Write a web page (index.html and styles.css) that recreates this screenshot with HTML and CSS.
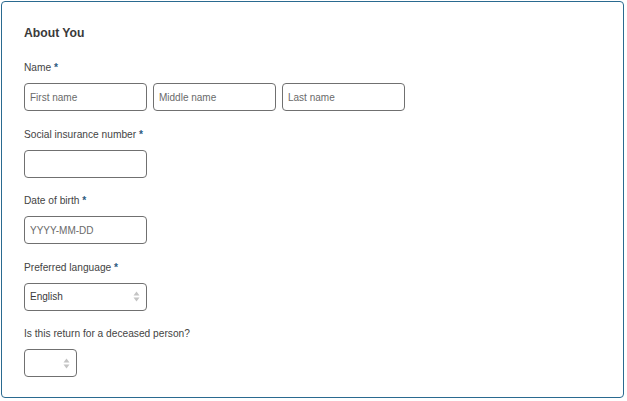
FILE: index.html
```html
<!DOCTYPE html>
<html lang="en">
<head>
<meta charset="utf-8">
<title>About You</title>
<link rel="stylesheet" href="styles.css">
</head>
<body>
<form class="card">
  <h2 class="title">About You</h2>
  <div class="group">
    <label class="label">Name <span class="req">*</span></label>
    <div class="row">
      <input class="input" type="text" placeholder="First name">
      <input class="input" type="text" placeholder="Middle name">
      <input class="input" type="text" placeholder="Last name">
    </div>
  </div>
  <div class="group">
    <label class="label">Social insurance number <span class="req">*</span></label>
    <input class="input" type="text">
  </div>
  <div class="group">
    <label class="label">Date of birth <span class="req">*</span></label>
    <input class="input" type="text" placeholder="YYYY-MM-DD">
  </div>
  <div class="group">
    <label class="label">Preferred language <span class="req">*</span></label>
    <div class="select">
      <span class="select-value">English</span>
      <svg class="arrows" width="7" height="11" viewBox="0 0 7 11"><path d="M3.5 0.5 L6.5 4.5 H0.5 Z M3.5 10.5 L6.5 6.5 H0.5 Z" fill="#c4c4c4"/></svg>
    </div>
  </div>
  <div class="group">
    <label class="label">Is this return for a deceased person?</label>
    <div class="select small">
      <span class="select-value"></span>
      <svg class="arrows" width="7" height="11" viewBox="0 0 7 11"><path d="M3.5 0.5 L6.5 4.5 H0.5 Z M3.5 10.5 L6.5 6.5 H0.5 Z" fill="#c4c4c4"/></svg>
    </div>
  </div>
</form>
</body>
</html>
```

FILE: styles.css
```css
html, body {
  margin: 0;
  padding: 0;
  background: #ffffff;
}
body {
  font-family: "Liberation Sans", Arial, sans-serif;
  color: #333333;
}
.card {
  margin: 1px;
  width: 623px;
  height: 397px;
  box-sizing: border-box;
  border: 1px solid #2a6a90;
  border-radius: 4px;
  padding: 22px 22px 0 22px;
  display: flex;
  flex-direction: column;
  gap: 15.5px;
}
.title {
  margin: 0 0 2.5px 0;
  font-size: 12.2px;
  line-height: 18px;
  font-weight: bold;
  color: #3a3a3a;
}
.group {
  display: flex;
  flex-direction: column;
  align-items: flex-start;
  gap: 7px;
}
.label {
  font-size: 10.2px;
  line-height: 16px;
  color: #444444;
}
.req {
  color: #2b5b7e;
  font-weight: bold;
}
.row {
  display: flex;
  gap: 6px;
}
.input {
  width: 123px;
  height: 28px;
  box-sizing: border-box;
  border: 1px solid #707070;
  border-radius: 4px;
  padding: 0 5px;
  margin: 0;
  font-family: "Liberation Sans", Arial, sans-serif;
  font-size: 10px;
  color: #333333;
  background: #ffffff;
}
.input::placeholder {
  color: #6a6a6a;
}
.select {
  width: 123px;
  height: 28px;
  box-sizing: border-box;
  border: 1px solid #707070;
  border-radius: 4px;
  padding: 0 6px 0 5px;
  display: flex;
  align-items: center;
  justify-content: space-between;
  font-size: 10px;
  color: #3a3a3a;
}
.select.small {
  width: 53px;
}
.arrows {
  display: block;
}
```
